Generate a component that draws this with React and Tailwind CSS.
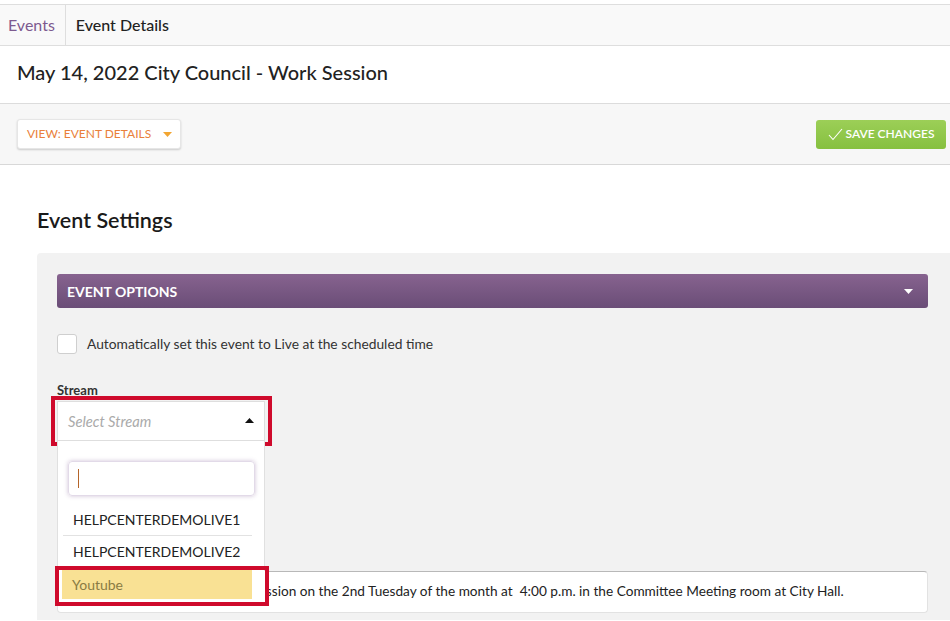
import React from "react";

export default function App() {
  return (
    <div className="w-[950px] h-[621px] overflow-hidden bg-white text-[#333]" style={{ fontFamily: "Lato, 'Open Sans', sans-serif" }}>
      {/* breadcrumb */}
      <div className="h-[4px] bg-white" />
      <div className="h-[42px] flex items-stretch border-t border-b border-[#dedede] bg-[#f9f9f9]">
        <div className="pl-[8px] pr-[10px] flex items-center border-r border-[#dedede] text-[16px] text-[#7d5a8f]">Events</div>
        <div className="px-[10px] flex items-center text-[16px] font-medium text-[#222]">Event Details</div>
      </div>
      {/* title */}
      <div className="h-[58px] flex items-center pb-[5px] px-[17px] border-b border-[#dcdcdc]">
        <h1 className="text-[20px] text-[#222] font-medium">May 14, 2022 City Council - Work Session</h1>
      </div>
      {/* toolbar */}
      <div className="h-[61px] flex items-center justify-between pl-[17px] pr-[4px] bg-[#f7f7f7] border-b border-[#d8d8d8]">
        <button className="h-[30px] w-[164px] flex items-center pl-[9px] gap-[12px] bg-white rounded-[3px] border border-[#e6e6e6] shadow-[0_1px_2px_rgba(0,0,0,0.18)] text-[12px] text-[#e9803a] uppercase">
          <span>View: Event Details</span>
          <svg width="9" height="5" viewBox="0 0 9 5"><path d="M0 0h9L4.5 5z" fill="#f2a531" /></svg>
        </button>
        <button className="h-[29px] w-[130px] flex items-center justify-center gap-[3px] rounded-[3px] bg-gradient-to-b from-[#9ccf57] to-[#86c03f] text-white text-[12px] font-semibold uppercase">
          <svg width="15" height="13" viewBox="0 0 15 13"><path d="M1 7l4 4.5L14 1" fill="none" stroke="#fff" strokeWidth="1.1" /></svg>
          <span>Save Changes</span>
        </button>
      </div>
      {/* content */}
      <div className="pl-[37px]">
        <h2 className="pt-[39px] h-[88px] text-[21.5px] font-semibold text-[#1a1a1a]">Event Settings</h2>
        <div className="bg-[#f2f2f2] rounded-tl-[4px] pt-[21px] pl-[20px] pr-[22px] h-[367px]">
          <div className="h-[34px] rounded-[3px] bg-gradient-to-b from-[#87638f] to-[#6a4d77] flex items-center justify-between pl-[10px] pr-[15px]">
            <span className="text-white text-[14px] font-bold">EVENT OPTIONS</span>
            <svg width="9" height="5" viewBox="0 0 9 5"><path d="M0 0h9L4.5 5z" fill="#fff" /></svg>
          </div>
          <div className="mt-[26px] flex items-center gap-[10px]">
            <div className="w-[20px] h-[20px] bg-white border border-[#cfcfcf] rounded-[3px]" />
            <span className="text-[13.8px] text-[#333]">Automatically set this event to Live at the scheduled time</span>
          </div>
          <div className="mt-[27px] text-[13px] font-bold text-[#333] leading-[16px]">Stream</div>
          <div className="relative w-[208px] mt-[3px]">
            <div className="h-[40px] bg-white border border-[#dedede] flex items-center justify-between pl-[10px] pr-[10px]">
              <span className="italic text-[14.7px] text-[#aaa]">Select Stream</span>
              <svg width="9" height="5" viewBox="0 0 9 5"><path d="M0 5h9L4.5 0z" fill="#111" /></svg>
            </div>
            {/* annotation */}
            <div className="absolute left-[-6px] top-[-5px] w-[221px] h-[50px] border-[4px] border-[#cf0a2c] pointer-events-none" />
            {/* dropdown */}
            <div className="absolute left-0 top-[40px] w-[208px] h-[130px] bg-white border-x border-[#e0e0e0] z-10 pt-[20px]">
              <div className="ml-[10px] mr-[9px] h-[35px] rounded-[4px] border border-[#e2dae8] shadow-[0_0_4px_rgba(120,80,140,0.35)] flex items-center pl-[9px]">
                <div className="w-[1px] h-[19px] bg-[#b5652a]" />
              </div>
              <div className="ml-[5px] mr-[12px] mt-[8px] h-[32px] flex items-center pl-[10px] text-[14px] text-[#222] border-b border-[#e2e2e2]">HELPCENTERDEMOLIVE1</div>
              <div className="ml-[5px] mr-[12px] h-[32px] flex items-center pl-[10px] text-[14px] text-[#222]">HELPCENTERDEMOLIVE2</div>
            </div>
            <div className="absolute left-[5px] top-[169px] w-[190px] h-[29px] flex items-center pl-[10px] bg-[#f9e194] text-[14px] text-[#8a7b43] z-10">Youtube</div>
            <div className="absolute left-0 top-[169px] w-[208px] h-[34px] bg-white border-l border-[#e0e0e0] z-[5]" />
            <div className="absolute left-[-2px] top-[165px] w-[214px] h-[40px] border-[4px] border-[#cf0a2c] z-20 pointer-events-none" />
          </div>
          <div className="mt-[130px] h-[42px] bg-white rounded-[4px] border border-[#e2e2e2] border-t-[#b8b8b8] flex items-center pl-[10px] text-[13.65px] text-[#222] whitespace-nowrap overflow-hidden">
            <span className="-ml-[1px]">The City Council holds a Work Session on the 2nd Tuesday of the month at&nbsp; 4:00 p.m. in the Committee Meeting room at City Hall.</span>
          </div>
        </div>
      </div>
    </div>
  );
}
